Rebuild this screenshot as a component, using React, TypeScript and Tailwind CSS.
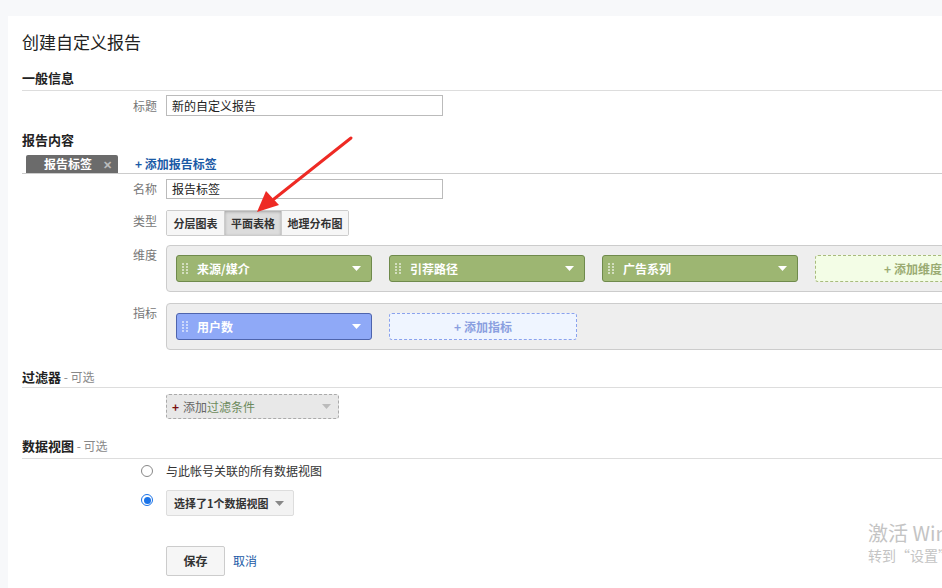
import React from 'react';

const font = { fontFamily: '"Noto Sans CJK SC", "Noto Sans", sans-serif' };

const Grip = () => (
  <svg width="6" height="12" viewBox="0 0 6 12" className="shrink-0">
    {[0, 3, 6, 9].map((y) =>
      [0, 4].map((x) => <rect key={`${x}-${y}`} x={x} y={y} width="2" height="2" fill="rgba(255,255,255,0.55)" />)
    )}
  </svg>
);

const Caret = ({ color = '#fff' }: { color?: string }) => (
  <svg width="9" height="5" viewBox="0 0 9 5" className="shrink-0">
    <polygon points="0,0 9,0 4.5,5" fill={color} />
  </svg>
);

const Chip = ({ label, tone }: { label: string; tone: 'green' | 'blue' }) => (
  <div
    className={
      'flex h-[27px] w-[196px] shrink-0 items-center rounded-[3px] border pl-[5px] pr-[10px] ' +
      (tone === 'green' ? 'border-[#6f8a4c] bg-[#9db672]' : 'border-[#4e64ad] bg-[#8fa9f7]')
    }
  >
    <Grip />
    <span className="ml-[9px] flex-1 text-[12px] font-bold leading-[16px] text-white">{label}</span>
    <Caret />
  </div>
);

const Label = ({ children, top = 'pt-0' }: { children?: React.ReactNode; top?: string }) => (
  <div className={`w-[144px] shrink-0 pr-[9px] text-right text-[12px] leading-[18px] text-[#777] ${top}`}>
    {children}
  </div>
);

const Heading = ({ title, optional, pb = 'pb-[3px]' }: { title: string; optional?: boolean; pb?: string }) => (
  <div className={`border-b border-[#ddd] text-[13px] leading-[18px] ${pb}`}>
    <span className="font-bold text-[#222]">{title}</span>
    {optional && <span className="text-[12px] text-[#888]"> - 可选</span>}
  </div>
);

const Radio = ({ checked }: { checked?: boolean }) => (
  <span
    className={
      'flex h-[12px] w-[12px] items-center justify-center rounded-full border ' +
      (checked ? 'border-[#1a73e8]' : 'border-[#888] bg-white')
    }
  >
    {checked && <span className="h-[7px] w-[7px] rounded-full bg-[#1a73e8]" />}
  </span>
);

export default function App() {
  return (
    <div className="relative h-[588px] w-[942px] overflow-hidden bg-[#f7f8fa] leading-[18px]" style={font}>
      <div className="ml-[8px] mt-[16px] h-[572px] bg-white pl-[14px] pt-[14px]">
        <h1 className="h-[24px] text-[17px] leading-[24px] text-[#222]">创建自定义报告</h1>

        <div className="mt-[15px]">
          <Heading title="一般信息" />
        </div>
        <div className="mt-[4px] flex items-center">
          <Label>标题</Label>
          <div className="flex h-[21px] w-[277px] items-center border border-[#bbb] px-[5px] text-[12px] text-[#222]">
            新的自定义报告
          </div>
        </div>

        <div className="mt-[15px] text-[13px] font-bold leading-[18px] text-[#222]">报告内容</div>
        <div className="mt-[6px] flex h-[19px] items-end border-b border-[#ccc]">
          <div className="ml-[4px] flex h-[18px] w-[92px] items-center rounded-t-[2px] bg-[#6b6b6b] pl-[18px] text-[12px] font-bold leading-[16px] text-white">
            报告标签
            <span className="ml-[11px] text-[11px] text-[#bbb]">✕</span>
          </div>
          <span className="mb-[1px] ml-[17px] text-[12px] font-bold leading-[16px] text-[#1a5aa6]">+ 添加报告标签</span>
        </div>

        <div className="mt-[5px] flex items-center">
          <Label>名称</Label>
          <div className="flex h-[20px] w-[277px] items-center border border-[#bbb] px-[5px] text-[12px] text-[#222]">
            报告标签
          </div>
        </div>

        <div className="mt-[11px] flex items-start">
          <Label top="pt-[2px]">类型</Label>
          <div className="flex h-[26px] overflow-hidden rounded-[2px] border border-[#ccc] text-[11px] font-bold text-[#333]">
            <div className="flex w-[57px] items-center justify-center bg-[#f6f6f6]">分层图表</div>
            <div className="flex w-[58px] items-center justify-center border-x border-[#ccc] bg-[#dcdcdc] shadow-[inset_0_1px_3px_rgba(0,0,0,0.25)]">
              平面表格
            </div>
            <div className="flex w-[66px] items-center justify-center bg-[#f6f6f6]">地理分布图</div>
          </div>
        </div>

        <div className="mt-[9px] flex items-start">
          <Label top="pt-[1px]">维度</Label>
          <div className="flex h-[47px] w-[820px] shrink-0 items-center gap-[17px] rounded-[4px] border border-[#ccc] bg-[#eeeeee] pl-[9px]">
            <Chip label="来源/媒介" tone="green" />
            <Chip label="引荐路径" tone="green" />
            <Chip label="广告系列" tone="green" />
            <div className="flex h-[27px] w-[196px] shrink-0 items-center justify-center rounded-[3px] border border-dashed border-[#a9bb7d] bg-[#f3fde6] text-[12px] font-bold text-[#9aab72]">
              + 添加维度
            </div>
          </div>
        </div>

        <div className="mt-[11px] flex items-start">
          <Label top="pt-[1px]">指标</Label>
          <div className="flex h-[47px] w-[820px] shrink-0 items-center gap-[17px] rounded-[4px] border border-[#ccc] bg-[#eeeeee] pl-[9px]">
            <Chip label="用户数" tone="blue" />
            <div className="flex h-[27px] w-[188px] shrink-0 items-center justify-center rounded-[3px] border border-dashed border-[#8aa2ee] bg-[#eff5ff] text-[12px] font-bold text-[#8a9fe0]">
              + 添加指标
            </div>
          </div>
        </div>

        <div className="mt-[18px]">
          <Heading title="过滤器" optional pb="pb-[1px]" />
        </div>
        <div className="mt-[6px] flex">
          <Label />
          <div className="flex h-[25px] w-[173px] items-center rounded-[3px] border border-dashed border-[#aaa] bg-[#e8e8e8] pl-[5px] pr-[7px] text-[12px]">
            <span className="font-bold text-[#7a1010]">+</span>
            <span className="ml-[4px] text-[#666]">添加</span>
            <span className="flex-1 text-[#6c8a5c]">过滤条件</span>
            <Caret color="#bbb" />
          </div>
        </div>

        <div className="mt-[18px]">
          <Heading title="数据视图" optional />
        </div>
        <div className="mt-[3px] flex h-[18px] items-center">
          <div className="flex w-[144px] shrink-0 justify-end pr-[13px]">
            <Radio />
          </div>
          <span className="text-[12px] text-[#333]">与此帐号关联的所有数据视图</span>
        </div>
        <div className="mt-[10px] flex items-start">
          <div className="flex w-[144px] shrink-0 justify-end pr-[13px] pt-[4px]">
            <Radio checked />
          </div>
          <div className="flex h-[26px] w-[128px] items-center rounded-[2px] border border-[#ddd] bg-[#f3f3f3] pl-[7px] pr-[9px] text-[11px] font-bold text-[#333]">
            <span className="flex-1 whitespace-nowrap">选择了1个数据视图</span>
            <Caret color="#888" />
          </div>
        </div>

        <div className="mt-[30px] flex items-center">
          <div className="w-[144px] shrink-0" />
          <div className="flex h-[30px] w-[59px] items-center justify-center rounded-[2px] border border-[#ccc] bg-[#f6f6f6] text-[12px] font-bold text-[#333]">
            保存
          </div>
          <span className="ml-[8px] text-[12px] text-[#1a5aa6]">取消</span>
        </div>
      </div>

      <svg className="pointer-events-none absolute left-0 top-0" width="942" height="588">
        <line x1="351" y1="138" x2="274" y2="199" stroke="#ee2a24" strokeWidth="3" strokeLinecap="round" />
        <polygon points="257,212 266,191 279,205" fill="#ee2a24" />
      </svg>

      <div className="pointer-events-none absolute left-[868px] top-[520px] whitespace-nowrap text-[#c4c4c4]">
        <div className="text-[20px] leading-[26px]">激活 Windows</div>
        <div className="text-[14px] leading-[18px]">转到“设置”以激活 Windows。</div>
      </div>
    </div>
  );
}
